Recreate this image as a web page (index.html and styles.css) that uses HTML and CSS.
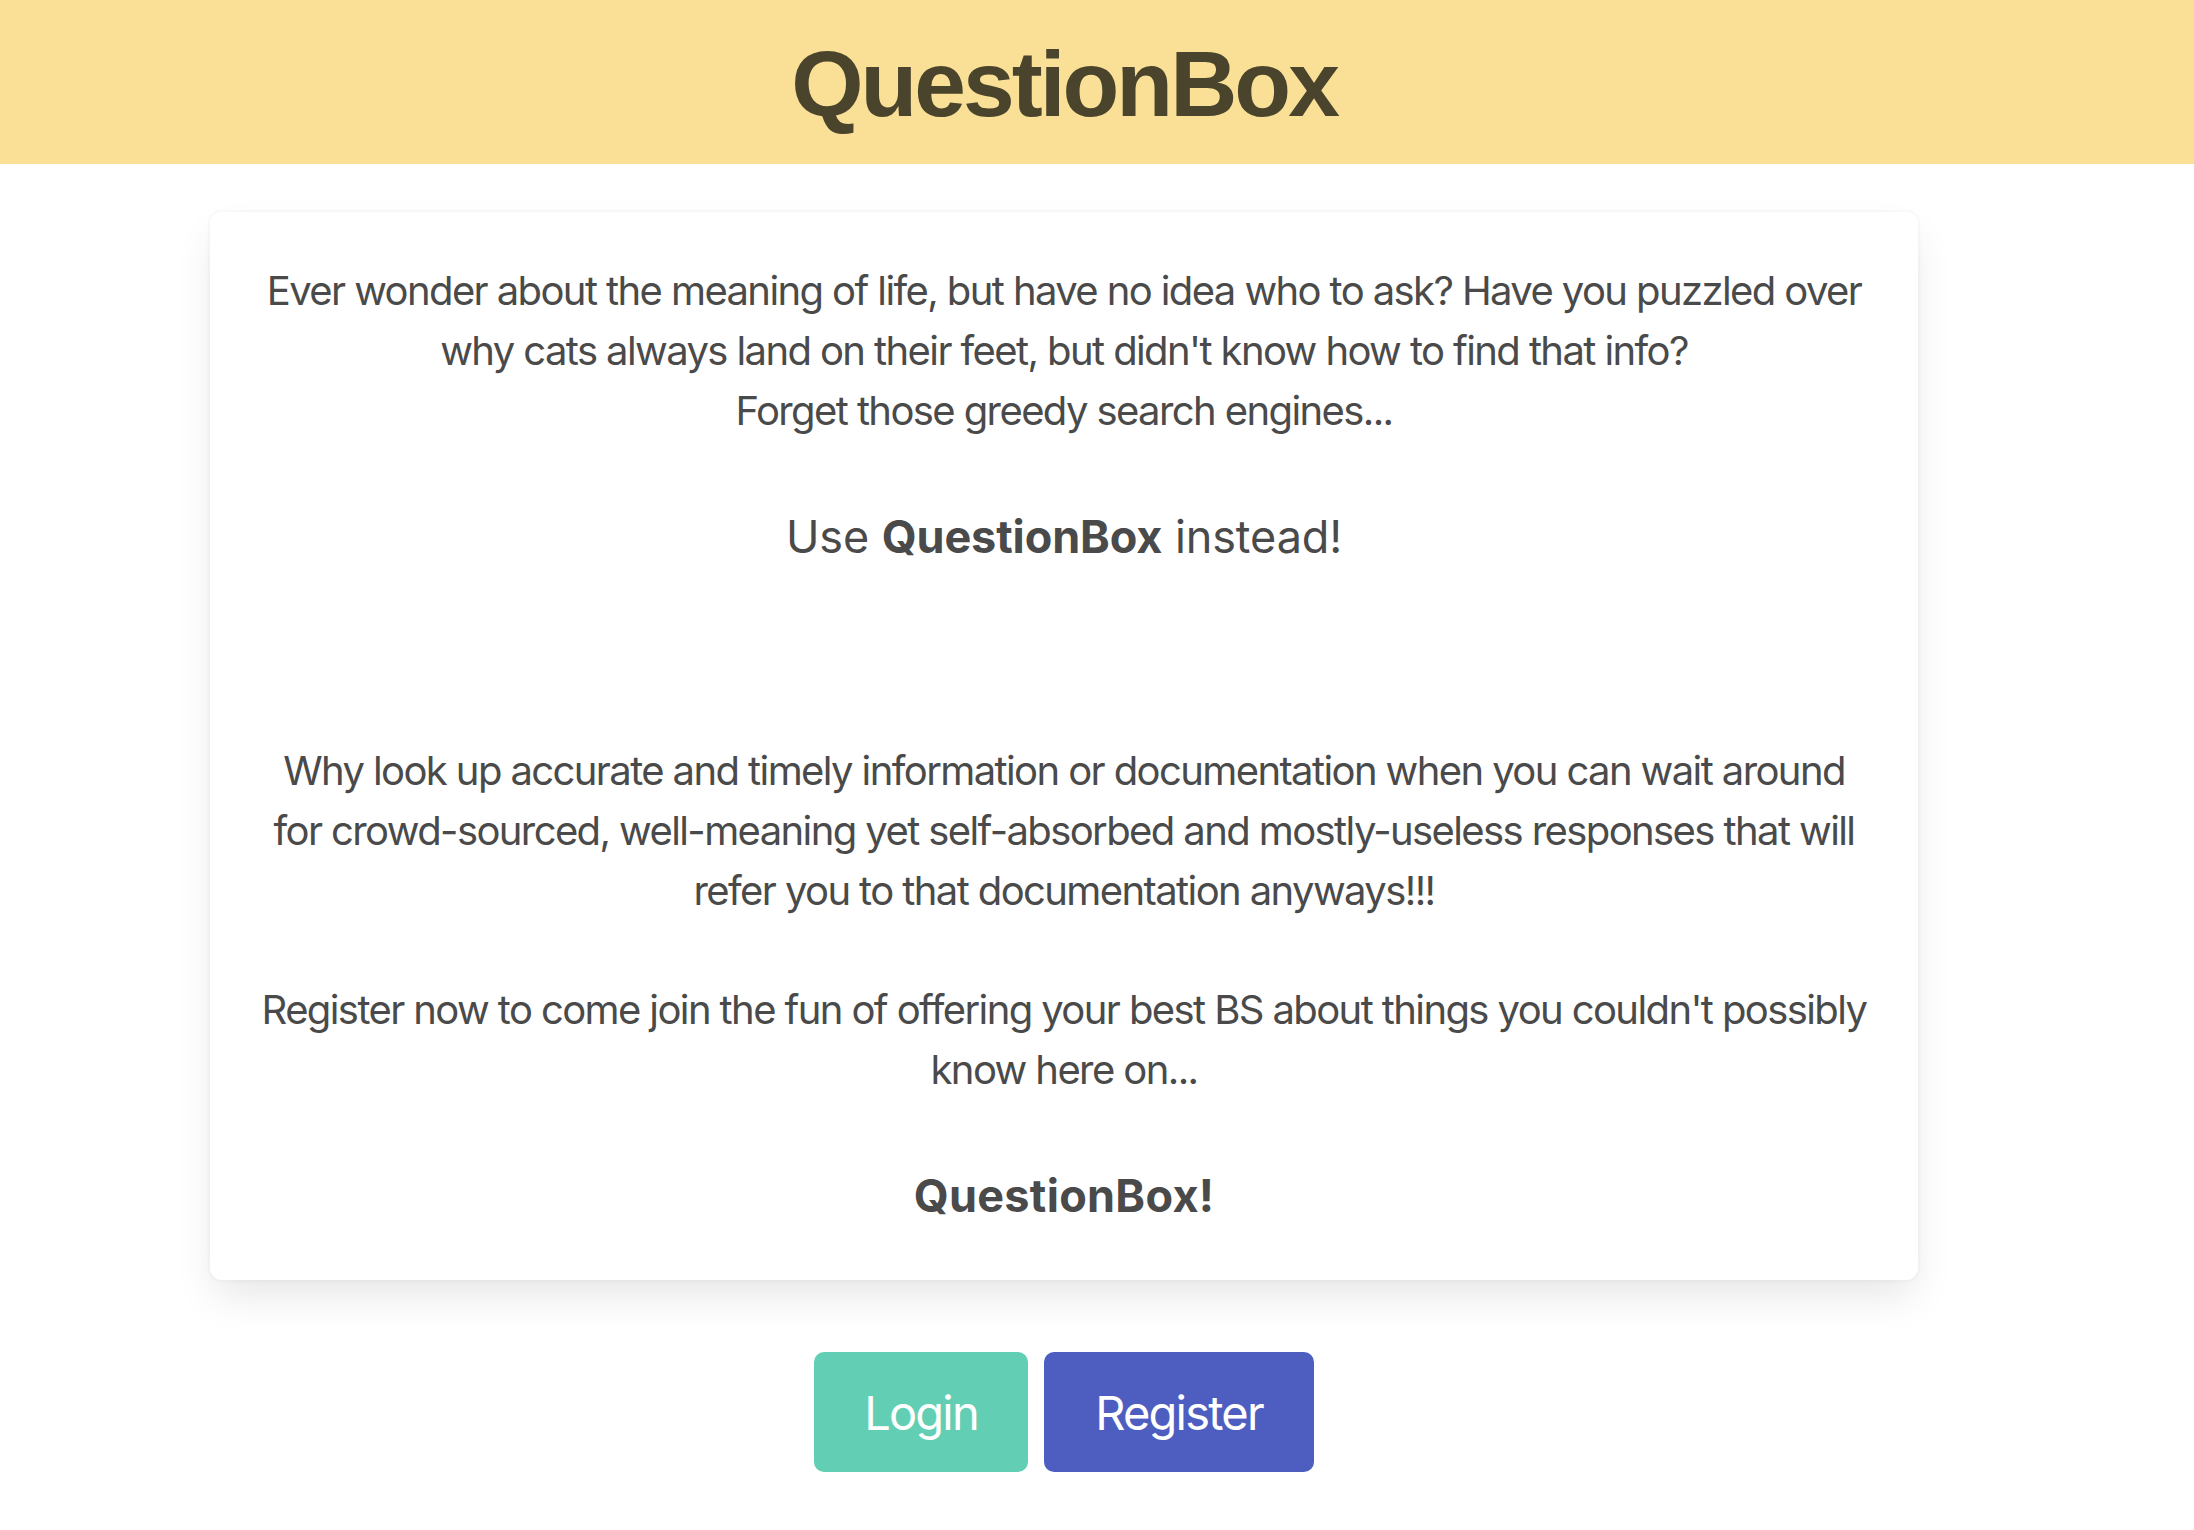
FILE: index.html
```html
<!DOCTYPE html>
<html lang="en">
<head>
<meta charset="utf-8">
<title>QuestionBox</title>
<link rel="stylesheet" href="styles.css">
</head>
<body>
<header class="site-header">
  <h1 class="site-title">QuestionBox</h1>
</header>
<main class="page">
  <section class="box">
    <p class="intro">Ever wonder about the meaning of life, but have no idea who to ask? Have you puzzled over<br>why cats always land on their feet, but didn't know how to find that info?<br>Forget those greedy search engines...</p>
    <p class="lead">Use <strong>QuestionBox</strong> instead!</p>
    <p class="body-text">Why look up accurate and timely information or documentation when you can wait around<br>for crowd-sourced, well-meaning yet self-absorbed and mostly-useless responses that will<br>refer you to that documentation anyways!!!</p>
    <p class="body-text gap">Register now to come join the fun of offering your best BS about things you couldn't possibly<br>know here on...</p>
    <p class="closing">QuestionBox!</p>
  </section>
  <div class="actions">
    <a class="btn btn-login" href="#">Login</a>
    <a class="btn btn-register" href="#">Register</a>
  </div>
</main>
</body>
</html>
```
FILE: styles.css
```css
html, body {
  margin: 0;
  padding: 0;
  background: #ffffff;
}
body {
  font-family: Inter, "Noto Sans", sans-serif;
  color: #4a4a4a;
}
.site-header {
  background: #fae096;
  height: 164px;
  display: flex;
  align-items: center;
  justify-content: center;
  padding-right: 66px;
}
.site-title {
  margin: 0;
  font-family: "Liberation Sans", Arial, sans-serif;
  font-weight: 700;
  font-size: 93px;
  letter-spacing: -3px;
  line-height: 1;
  color: #4a442c;
  transform: translateY(2px);
}
.page {
  width: 2128px;
  padding-top: 48px;
  box-sizing: border-box;
}
.box {
  margin: 0 210px;
  background: #fff;
  border-radius: 12px;
  box-shadow: 0 20px 40px -5px rgba(10, 10, 10, 0.1), 0 0 0 2.5px rgba(10, 10, 10, 0.02);
  padding: 49px 40px 50px;
  text-align: center;
}
.box p {
  margin: 0;
  font-size: 40px;
  line-height: 60px;
  letter-spacing: -1.6px;
  white-space: nowrap;
}
.box .lead {
  font-size: 45px;
  line-height: 68px;
  letter-spacing: -0.1px;
  margin-top: 62px;
}
.box .lead strong,
.box .closing {
  font-weight: 700;
}
.box .body-text {
  margin-top: 170px;
}
.box .body-text.gap {
  margin-top: 59px;
}
.box .closing {
  font-size: 45px;
  line-height: 68px;
  letter-spacing: 0.3px;
  margin-top: 62px;
}
.actions {
  display: flex;
  justify-content: center;
  gap: 16px;
  margin-top: 72px;
}
.btn {
  display: flex;
  align-items: center;
  justify-content: center;
  height: 120px;
  border-radius: 10px;
  font-size: 47px;
  letter-spacing: -1.8px;
  color: #ffffff;
  text-decoration: none;
  box-sizing: border-box;
}
.btn-login {
  background: #62cfb4;
  width: 214px;
}
.btn-register {
  background: #4e5ec0;
  width: 270px;
}
```
